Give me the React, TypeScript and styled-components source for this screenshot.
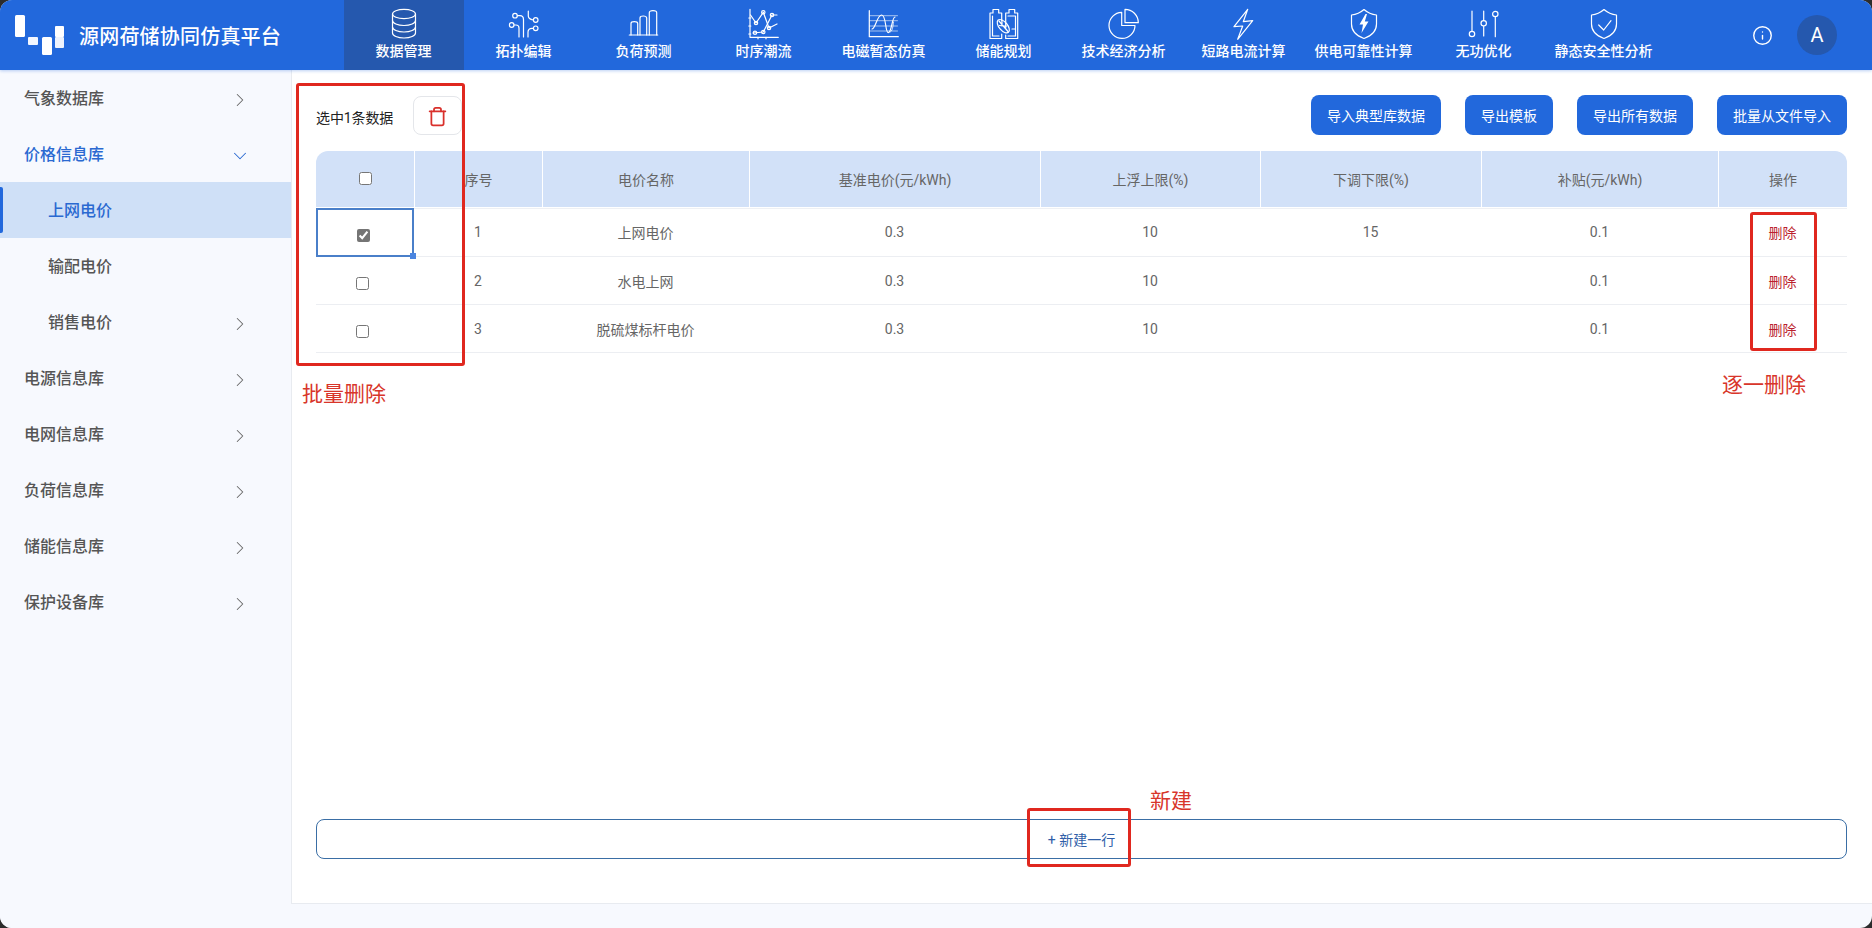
import React from 'react';
import styled, { createGlobalStyle } from 'styled-components';
import { ChevronDown, ChevronRight, Info, Trash } from 'lucide-react';

const GlobalStyle = createGlobalStyle`
  html, body {
    margin: 0;
    padding: 0;
    background: #2c2c2c;
  }
  body {
    font-family: Roboto, "Noto Sans CJK SC", sans-serif;
  }
  * {
    box-sizing: border-box;
  }
`;

const Page = styled.div`
  position: relative;
  width: 1872px;
  height: 928px;
  display: flex;
  flex-direction: column;
  overflow: hidden;
  border-radius: 12px;
  background: #f7f9fe;
`;

const Header = styled.header`
  position: relative;
  z-index: 2;
  flex: 0 0 70px;
  display: flex;
  background: #2268dc;
  box-shadow: 0 1px 3px rgba(34, 104, 220, 0.3);
  color: #fff;
`;

const Brand = styled.div`
  width: 344px;
  display: flex;
  align-items: center;
  padding-left: 15px;
  gap: 15px;
`;

const BrandName = styled.span`
  font-size: 20px;
  font-weight: 500;
  letter-spacing: 0.2px;
  white-space: nowrap;
`;

const Nav = styled.nav`
  display: flex;
`;

const NavItem = styled.div<{ $active?: boolean }>`
  width: 120px;
  display: flex;
  flex-direction: column;
  align-items: center;
  padding-top: 8px;
  background: ${(p) => (p.$active ? '#2558ae' : 'transparent')};
`;

const NavLabel = styled.span`
  margin-top: 1px;
  margin-right: 1px;
  font-size: 14px;
  line-height: 20px;
  font-weight: 500;
  white-space: nowrap;
`;

const NavIcon = styled.svg`
  width: 40px;
  height: 32px;
  fill: none;
  stroke: #fff;
  stroke-width: 1.2;
  stroke-linecap: round;
  stroke-linejoin: round;
`;

const HeaderRight = styled.div`
  margin-left: auto;
  padding-right: 35px;
  display: flex;
  align-items: center;
  gap: 24px;
`;

const Avatar = styled.div`
  width: 40px;
  height: 40px;
  border-radius: 50%;
  background: #2558ae;
  display: flex;
  align-items: center;
  justify-content: center;
  font-size: 20px;
`;

const Body = styled.div`
  flex: 1;
  min-height: 0;
  display: flex;
`;

const Sidebar = styled.aside`
  flex: 0 0 291px;
  background: #f7f9fe;
`;

const MenuRow = styled.div<{ $sub?: boolean; $open?: boolean; $selected?: boolean }>`
  position: relative;
  height: 56px;
  display: flex;
  align-items: center;
  justify-content: space-between;
  padding: 0 40px 2px ${(p) => (p.$sub ? '48px' : '24px')};
  font-size: 16px;
  font-weight: 500;
  color: ${(p) => (p.$open || p.$selected ? '#2a69d1' : '#555')};
  background: ${(p) => (p.$selected ? '#cfe0f7' : 'transparent')};

  ${(p) =>
    p.$selected &&
    `
    &::before {
      content: '';
      position: absolute;
      left: 0;
      top: 5px;
      bottom: 5px;
      width: 3px;
      border-radius: 0 2px 2px 0;
      background: #2268dc;
    }
  `}
`;

const ArrowRight = styled(ChevronRight)`
  margin-top: 5px;
  color: #666;
`;

const ArrowDown = styled(ChevronDown)`
  margin-top: 5px;
  color: #2a69d1;
`;

const Panel = styled.main`
  flex: 1;
  min-width: 0;
  margin-bottom: 24px;
  padding: 25px 25px 44px 24px;
  display: flex;
  flex-direction: column;
  background: #fff;
  border-left: 1px solid #e8ebf0;
  border-bottom: 1px solid #e8ebf0;
`;

const Toolbar = styled.div`
  display: flex;
  align-items: center;
  height: 40px;
  margin-bottom: 16px;
`;

const SelectedCount = styled.span`
  width: 97px;
  font-size: 14px;
  letter-spacing: -0.1px;
  color: #222;
  margin-top: 4px;
`;

const TrashButton = styled.button`
  width: 49px;
  height: 39px;
  padding: 3px 0 0;
  display: flex;
  align-items: center;
  justify-content: center;
  background: #fff;
  border: 1px solid #e4e6ea;
  border-radius: 8px;
  color: #d9302b;
`;

const ToolbarActions = styled.div`
  margin-left: auto;
  display: flex;
  gap: 24px;
`;

const PrimaryButton = styled.button`
  height: 40px;
  padding: 0 16px;
  border: none;
  border-radius: 8px;
  background: #2268dc;
  color: #fff;
  font-family: inherit;
  font-size: 14px;
`;

const Table = styled.table`
  width: 1531px;
  table-layout: fixed;
  border-collapse: separate;
  border-spacing: 0;
  font-size: 14px;
  color: #666;
  text-align: center;

  tbody tr:first-child td {
    height: 49px;
  }
`;

const HeadCell = styled.th`
  height: 57px;
  padding: 0;
  font-weight: 400;
  background: #d2e1f8;
  border-left: 1px solid #fff;
  border-bottom: 1px solid #fff;
  box-shadow: 0 1px 0 #eef0f4;

  &:first-child {
    border-left: none;
    border-top-left-radius: 12px;
  }
  &:last-child {
    border-top-right-radius: 12px;
  }
`;

const CheckHeadCell = styled(HeadCell)`
  padding-bottom: 4px;
`;

const Cell = styled.td`
  height: 48px;
  padding: 0;
  border-bottom: 1px solid #eceef2;
`;

const CheckCell = styled(Cell)<{ $focused?: boolean }>`
  position: relative;
  padding: 3px 6px 0 0;
  ${(p) => p.$focused && 'border: 2px solid #4a7fc9; padding: 3px 4px 0 0;'}
`;

const FillHandle = styled.span`
  position: absolute;
  right: -4px;
  bottom: -4px;
  width: 6px;
  height: 6px;
  background: #4a85e0;
`;

const CheckBox = styled.input`
  margin: 0;
  width: 13px;
  height: 13px;
  accent-color: #757575;
  vertical-align: middle;
`;

const DeleteLink = styled.span`
  color: #bb1f2e;
`;

const NewRowButton = styled.button`
  margin-top: auto;
  height: 40px;
  border: 1px solid #3a6ea5;
  border-radius: 8px;
  background: #fff;
  color: #2f5ea8;
  font-family: inherit;
  font-size: 14px;
`;

// red marks drawn on top of the screenshot
const MarkBox = styled.div<{ $x: number; $y: number; $w: number; $h: number }>`
  position: absolute;
  left: ${(p) => p.$x}px;
  top: ${(p) => p.$y}px;
  width: ${(p) => p.$w}px;
  height: ${(p) => p.$h}px;
  border: 3px solid #e0281f;
  border-radius: 3px;
  z-index: 3;
`;

const MarkText = styled.span<{ $x: number; $y: number }>`
  position: absolute;
  left: ${(p) => p.$x}px;
  top: ${(p) => p.$y}px;
  font-size: 21px;
  line-height: 30px;
  color: #d8352a;
  white-space: nowrap;
  z-index: 3;
`;

const DatabaseIcon = () => (
  <NavIcon viewBox="0 0 40 32">
    <ellipse cx="20" cy="6" rx="11.5" ry="4.6" />
    <path d="M8.5 6v19c0 2.7 5.1 5 11.5 5s11.5-2.3 11.5-5V6" />
    <path d="M8.5 12.5c0 2.7 5.1 5 11.5 5s11.5-2.3 11.5-5" />
    <path d="M8.5 19c0 2.7 5.1 5 11.5 5s11.5-2.3 11.5-5" />
  </NavIcon>
);

const TopologyIcon = () => (
  <NavIcon viewBox="0 0 40 32">
    <circle cx="11" cy="7.7" r="2.3" />
    <circle cx="7.7" cy="17" r="2.3" />
    <circle cx="31.7" cy="12" r="2.3" />
    <circle cx="31.7" cy="20.3" r="2.3" />
    <path d="M13.3 7.7H16q3.5 0 3.5 4V29" />
    <path d="M10 17h2q3 0 3 3v9" />
    <path d="M24.3 3v5q0 3 5 4" />
    <path d="M29.4 20.3H28q-4 0-4 4V29" />
  </NavIcon>
);

const BarsIcon = () => (
  <NavIcon viewBox="0 0 40 32">
    <path d="M5.3 27h28.4" />
    <path d="M7 27V15.5q0-1.8 3.3-1.8t3.4 1.8V27" />
    <path d="M16 27V10q0-2 3.3-2t3.4 2v17" />
    <path d="M25.3 27V4.7q0-2 3.7-2t3.7 2V27" />
  </NavIcon>
);

const TrendIcon = () => (
  <NavIcon viewBox="0 0 40 32">
    <path d="M6 1.3v28h28.3" />
    <path d="M4.8 26h2M4.8 18h2M4.8 10h2M14 29.3v1.500M22 29.3v1.500" />
    <path d="M6.5 7l5.500 8 7.300-10.700L25 20l8-4" />
    <path d="M9 25l10.300-1L28 7h5" />
    <circle cx="12" cy="15" r="1.700" />
    <circle cx="19.300" cy="4.300" r="1.700" />
    <circle cx="11" cy="24.800" r="1.700" />
    <circle cx="19.300" cy="24" r="1.700" />
    <circle cx="28" cy="7" r="1.700" />
    <circle cx="25" cy="20" r="1.700" />
  </NavIcon>
);

const WaveIcon = () => (
  <NavIcon viewBox="0 0 40 32">
    <path d="M5.300 2.700v26h29" />
    <path d="M5.500 7.700h28M5.500 12.700h28M5.500 18h28M5.500 23h28" strokeWidth="0.6" />
    <path d="M8 21C11.500 21 13 7 17.700 7S21 24.700 24.300 24.700 28 9 31 9" />
    <path d="M26 24c2.500 0 3-6 3.500-10" strokeWidth="0.8" />
  </NavIcon>
);

const BatteryIcon = () => (
  <NavIcon viewBox="0 0 40 32">
    <path d="M17.700 13V5h-3V1.500H9V5H6v25.500h11.700V26" />
    <path d="M8.500 8v20h6.500" />
    <path d="M21.700 20V5h3.300V1.500h5.700V5h3v25.500H21.700V27" />
    <path d="M24 8h7.500v20H24" />
    <path d="M28 21h3.500" />
    <ellipse cx="19.300" cy="18.200" rx="4.200" ry="8" transform="rotate(-40 19.300 18.200)" />
    <path d="M15 13l9 10.500M18 13.500v4.500h4.500M15.500 17.500l4.500.5" />
  </NavIcon>
);

const PieIcon = () => (
  <NavIcon viewBox="0 0 40 32">
    <path d="M17.700 4.400A13 13 0 1 0 31 17.500H17.700z" />
    <path d="M21 1.400V14.700H34.300A13.300 13.300 0 0 0 21 1.400z" />
  </NavIcon>
);

const BoltIcon = () => (
  <NavIcon viewBox="0 0 40 32">
    <path d="M23.700 1.300L10 18.700l8.700-.7-5 13.300 15-18.600-9.400 1z" />
  </NavIcon>
);

const ShieldBoltIcon = () => (
  <NavIcon viewBox="0 0 40 32">
    <path d="M20 1.500C16 5 12 6.500 7.500 7v9c0 8 5.500 12 12.500 14.500C27 28 32.500 24 32.500 16V7C28 6.500 24 5 20 1.500z" />
    <path d="M21.500 6l-6 10.500H19L17.500 25l7-11.500h-3.700L23 6z" fill="#fff" stroke="none" />
  </NavIcon>
);

const SlidersIcon = () => (
  <NavIcon viewBox="0 0 40 32">
    <path d="M8 3v20M19.700 3v9.500M19.700 18.200V28M31.300 9V28.700" />
    <circle cx="8" cy="26" r="2.700" />
    <circle cx="19.700" cy="15.300" r="2.700" />
    <circle cx="31.300" cy="6" r="2.700" />
  </NavIcon>
);

const ShieldCheckIcon = () => (
  <NavIcon viewBox="0 0 40 32">
    <path d="M20 1.500C16 5 12 6.500 7.500 7v9c0 8 5.500 12 12.500 14.500C27 28 32.500 24 32.500 16V7C28 6.500 24 5 20 1.500z" />
    <path d="M14.700 17l5 5 7.300-9.300" />
  </NavIcon>
);

const LogoMark = () => (
  <svg width="49" height="40" viewBox="0 0 49 40">
    <rect x="0" y="0" width="10" height="22" rx="1.500" fill="#fff" />
    <rect x="13" y="22" width="10" height="8" rx="1" fill="#f3f7ff" />
    <rect x="27" y="22" width="10" height="18" rx="1.500" fill="#fff" />
    <rect x="40" y="11" width="9" height="11" rx="1" fill="#fff" />
    <rect x="40" y="22" width="9" height="11" rx="1" fill="#eef3fd" />
  </svg>
);

const navItems = [
  { label: '数据管理', icon: <DatabaseIcon />, active: true },
  { label: '拓扑编辑', icon: <TopologyIcon /> },
  { label: '负荷预测', icon: <BarsIcon /> },
  { label: '时序潮流', icon: <TrendIcon /> },
  { label: '电磁暂态仿真', icon: <WaveIcon /> },
  { label: '储能规划', icon: <BatteryIcon /> },
  { label: '技术经济分析', icon: <PieIcon /> },
  { label: '短路电流计算', icon: <BoltIcon /> },
  { label: '供电可靠性计算', icon: <ShieldBoltIcon /> },
  { label: '无功优化', icon: <SlidersIcon /> },
  { label: '静态安全性分析', icon: <ShieldCheckIcon /> },
];

const menuItems = [
  { label: '气象数据库', arrow: 'right' },
  { label: '价格信息库', arrow: 'down', open: true },
  { label: '上网电价', sub: true, selected: true },
  { label: '输配电价', sub: true },
  { label: '销售电价', sub: true, arrow: 'right' },
  { label: '电源信息库', arrow: 'right' },
  { label: '电网信息库', arrow: 'right' },
  { label: '负荷信息库', arrow: 'right' },
  { label: '储能信息库', arrow: 'right' },
  { label: '保护设备库', arrow: 'right' },
];

const columns = [
  { title: '序号', width: 128 },
  { title: '电价名称', width: 207 },
  { title: '基准电价(元/kWh)', width: 291 },
  { title: '上浮上限(%)', width: 220 },
  { title: '下调下限(%)', width: 221 },
  { title: '补贴(元/kWh)', width: 237 },
  { title: '操作', width: 129 },
];

const rows = [
  { no: 1, name: '上网电价', base: '0.3', up: '10', down: '15', subsidy: '0.1' },
  { no: 2, name: '水电上网', base: '0.3', up: '10', down: '', subsidy: '0.1' },
  { no: 3, name: '脱硫煤标杆电价', base: '0.3', up: '10', down: '', subsidy: '0.1' },
];

const App: React.FC = () => {
  return (
    <Page>
      <GlobalStyle />
      <Header>
        <Brand>
          <LogoMark />
          <BrandName>源网荷储协同仿真平台</BrandName>
        </Brand>
        <Nav>
          {navItems.map((item) => (
            <NavItem key={item.label} $active={item.active}>
              {item.icon}
              <NavLabel>{item.label}</NavLabel>
            </NavItem>
          ))}
        </Nav>
        <HeaderRight>
          <Info size={21} strokeWidth={1.6} />
          <Avatar>A</Avatar>
        </HeaderRight>
      </Header>
      <Body>
        <Sidebar>
          {menuItems.map((item) => (
            <MenuRow key={item.label} $sub={item.sub} $open={item.open} $selected={item.selected}>
              {item.label}
              {item.arrow === 'right' && <ArrowRight size={22} strokeWidth={1.1} />}
              {item.arrow === 'down' && <ArrowDown size={22} strokeWidth={1.1} />}
            </MenuRow>
          ))}
        </Sidebar>
        <Panel>
          <Toolbar>
            <SelectedCount>选中1条数据</SelectedCount>
            <TrashButton>
              <Trash size={21} strokeWidth={2} />
            </TrashButton>
            <ToolbarActions>
              <PrimaryButton>导入典型库数据</PrimaryButton>
              <PrimaryButton>导出模板</PrimaryButton>
              <PrimaryButton>导出所有数据</PrimaryButton>
              <PrimaryButton>批量从文件导入</PrimaryButton>
            </ToolbarActions>
          </Toolbar>
          <Table>
            <colgroup>
              <col width={98} />
              {columns.map((c) => (
                <col key={c.title} width={c.width} />
              ))}
            </colgroup>
            <thead>
              <tr>
                <CheckHeadCell>
                  <CheckBox type="checkbox" readOnly />
                </CheckHeadCell>
                {columns.map((c) => (
                  <HeadCell key={c.title}>{c.title}</HeadCell>
                ))}
              </tr>
            </thead>
            <tbody>
              {rows.map((row, i) => (
                <tr key={row.no}>
                  <CheckCell $focused={i === 0}>
                    <CheckBox type="checkbox" defaultChecked={i === 0} />
                    {i === 0 && <FillHandle />}
                  </CheckCell>
                  <Cell>{row.no}</Cell>
                  <Cell>{row.name}</Cell>
                  <Cell>{row.base}</Cell>
                  <Cell>{row.up}</Cell>
                  <Cell>{row.down}</Cell>
                  <Cell>{row.subsidy}</Cell>
                  <Cell>
                    <DeleteLink>删除</DeleteLink>
                  </Cell>
                </tr>
              ))}
            </tbody>
          </Table>
          <NewRowButton>+ 新建一行</NewRowButton>
        </Panel>
      </Body>
      <MarkBox $x={296} $y={83} $w={169} $h={283} />
      <MarkBox $x={1750} $y={212} $w={67} $h={139} />
      <MarkBox $x={1027} $y={808} $w={104} $h={59} />
      <MarkText $x={302} $y={379}>批量删除</MarkText>
      <MarkText $x={1722} $y={370}>逐一删除</MarkText>
      <MarkText $x={1150} $y={786}>新建</MarkText>
    </Page>
  );
};

export default App;
